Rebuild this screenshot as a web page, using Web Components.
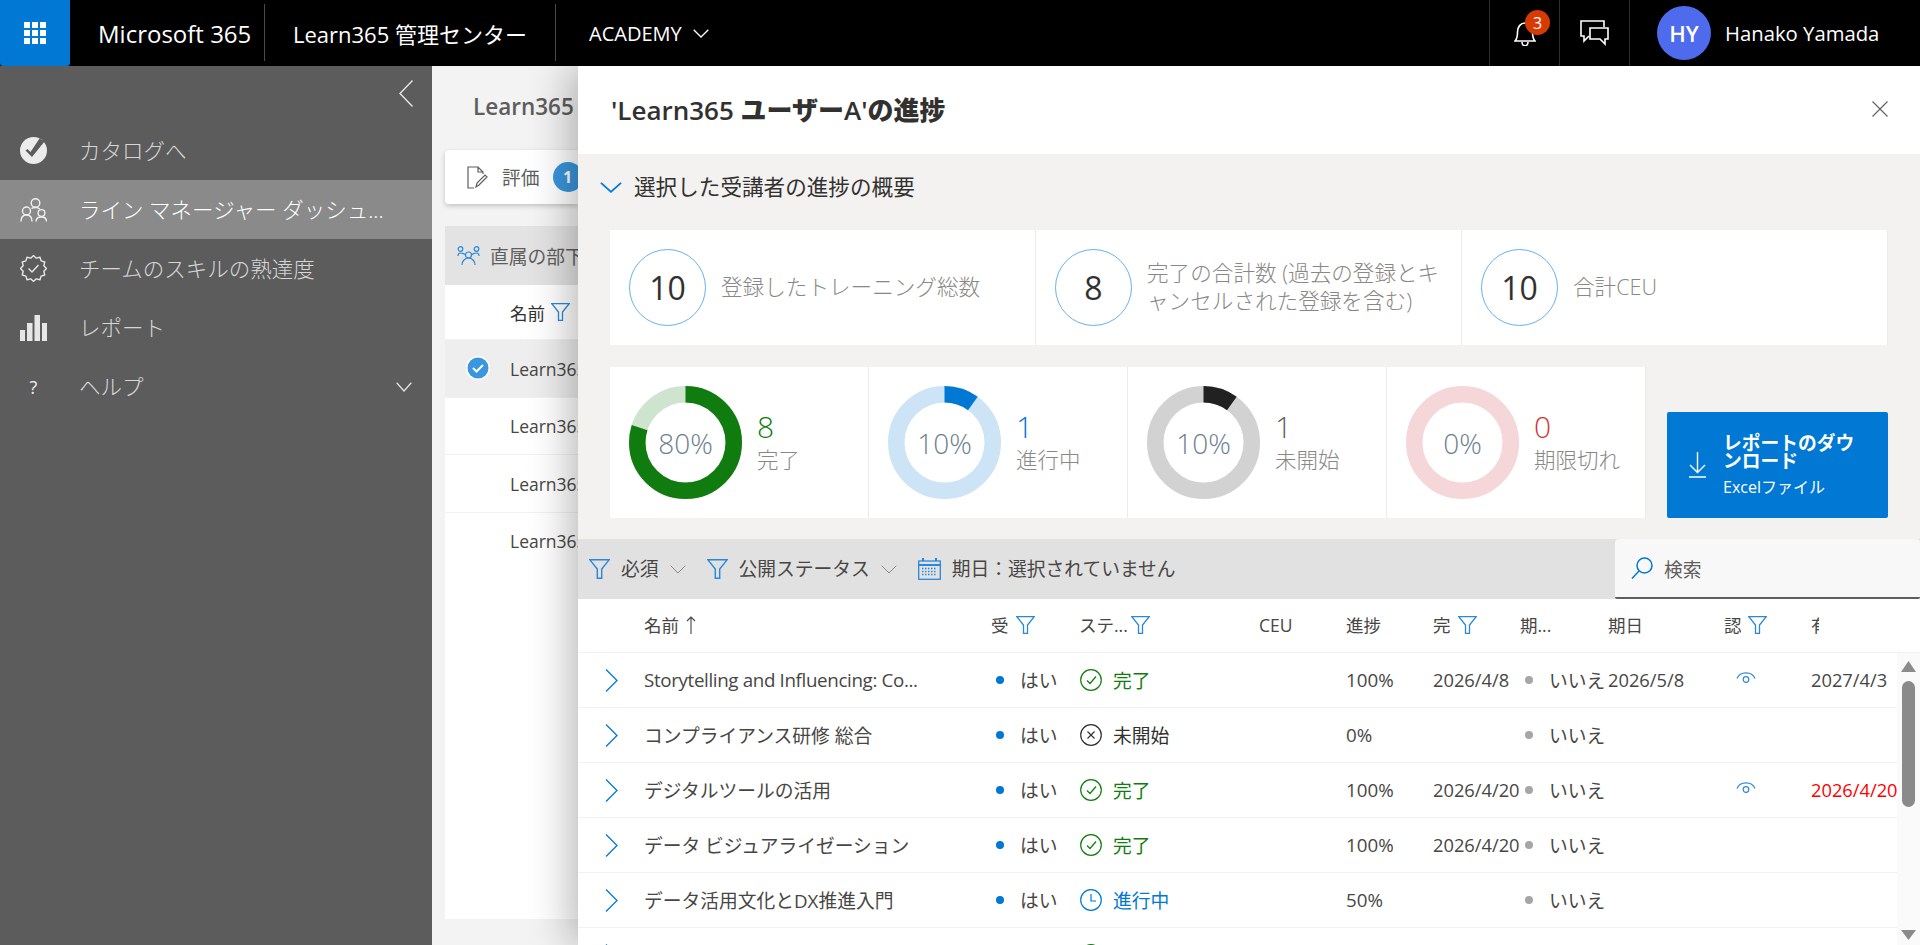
<!DOCTYPE html>
<html lang="ja">
<head>
<meta charset="utf-8">
<title>Learn365 管理センター</title>
<style>
  html, body { margin: 0; height: 945px; overflow: hidden; }
  body {
    font-family: "Open Sans", "Noto Sans CJK JP", sans-serif;
    color: #323130;
  }
</style>
</head>
<body>
<app-shell>
  <top-bar slot="top"></top-bar>
  <side-nav slot="nav">
    <nav-item>
      <svg slot="icon" width="27" height="27" viewBox="0 0 27 27"><circle cx="13.5" cy="13.5" r="13.5" fill="#ececec"/><path d="M5.500 13.500l2-1.500 3 3L19.500 1.500l5 3L12 20z" fill="#5c5c5c"/></svg>
      カタログへ
    </nav-item>
    <nav-item active>
      <svg slot="icon" width="27" height="24" viewBox="0 0 27 24" fill="none" stroke="#f0f0f0" stroke-width="1.4"><circle cx="15.500" cy="5" r="4.300"/><circle cx="6.500" cy="13" r="4"/><circle cx="21.500" cy="15" r="3.400"/><path d="M1 23.500c0-4.500 2-6.500 5.500-6.500s5.500 2 5.500 6.500M16 23.500c0-3 2-4.500 5.500-4.500s5 1.500 5 4.500M11.500 10.500c1.200-.7 2.600-1 4-1 1.800 0 3.200.5 4.500 1.500"/></svg>
      ライン マネージャー ダッシュ...
    </nav-item>
    <nav-item>
      <svg slot="icon" width="27" height="27" viewBox="0 0 27 27" fill="none" stroke="#e6e6e6" stroke-width="1.4" stroke-linejoin="round"><path d="M13.500.5 16.270 3.160 20 2.240 21.070 5.930 24.760 7 23.840 10.730 26.500 13.500 23.840 16.270 24.760 20 21.070 21.070 20 24.760 16.270 23.840 13.500 26.500 10.730 23.840 7 24.760 5.930 21.070 2.240 20 3.160 16.270.5 13.500 3.160 10.730 2.240 7 5.930 5.930 7 2.240 10.730 3.160z"/><path d="M8.500 13.500l3.500 3.500 6.500-7"/></svg>
      チームのスキルの熟達度
    </nav-item>
    <nav-item>
      <svg slot="icon" width="27" height="27" viewBox="0 0 27 27" fill="#e6e6e6"><rect y="16" width="5" height="11"/><rect x="7" y="9" width="5.500" height="18"/><rect x="14.500" y="1" width="5.500" height="26"/><rect x="22" y="9" width="5" height="18"/></svg>
      レポート
    </nav-item>
    <nav-item expandable>
      <span slot="icon" class="help">?</span>
      ヘルプ
    </nav-item>
  </side-nav>
  <learners-pane slot="main">
    <learner-row selected>Learn365 ユーザーA</learner-row>
    <learner-row>Learn365 ユーザーB</learner-row>
    <learner-row>Learn365 ユーザーC</learner-row>
    <learner-row>Learn365 ユーザーD</learner-row>
  </learners-pane>
  <progress-panel slot="panel">
    <span slot="title">'Learn365 <b>ユーザー</b>A'<b>の進捗</b></span>
    <stat-tile slot="stats" value="10">登録したトレーニング総数</stat-tile>
    <stat-tile slot="stats" value="8">完了の合計数 (過去の登録とキ<br>ャンセルされた登録を含む)</stat-tile>
    <stat-tile slot="stats" value="10">合計CEU</stat-tile>
    <donut-tile slot="donuts" percent="80" value="8" ring="#107c10" rest="#cfe4cf" tone="#107c10">完了</donut-tile>
    <donut-tile slot="donuts" percent="10" value="1" ring="#0078d4" rest="#cce4f6" tone="#0078d4">進行中</donut-tile>
    <donut-tile slot="donuts" percent="10" value="1" ring="#212121" rest="#d2d2d2" tone="#605e5c">未開始</donut-tile>
    <donut-tile slot="donuts" percent="0" value="0" ring="#d13438" rest="#f6d7d9" tone="#d13438">期限切れ</donut-tile>
    <filter-bar slot="filters"></filter-bar>
    <course-table slot="table">
      <course-row latin name="Storytelling and Influencing: Co..." status="done" progress="100%" finished="2026/4/8" due="2026/5/8" cert expiry="2027/4/3"></course-row>
      <course-row name="コンプライアンス研修 総合" status="todo" progress="0%"></course-row>
      <course-row name="デジタルツールの活用" status="done" progress="100%" finished="2026/4/20" cert expiry="2026/4/20" expired></course-row>
      <course-row name="データ ビジュアライゼーション" status="done" progress="100%" finished="2026/4/20"></course-row>
      <course-row name="データ活用文化とDX推進入門" status="doing" progress="50%"></course-row>
      <course-row status="done" partial></course-row>
    </course-table>
  </progress-panel>
</app-shell>

<script>
const FUNNEL = (w = 19, h = 18) => `<svg width="${w}" height="${h}" viewBox="0 0 19 18" fill="none" stroke="#2b88d8" stroke-width="1.3"><path d="M.8.7h17.400L11.500 9v8.300H7.500V9z"/></svg>`;
const CHEVRON_DOWN = (w, h, c, sw = 1.3) => `<svg width="${w}" height="${h}" viewBox="0 0 16 9" preserveAspectRatio="none" fill="none" stroke="${c}" stroke-width="${sw}" vector-effect="non-scaling-stroke"><path d="M.7.7 8 8l7.300-7.300"/></svg>`;

class AppShell extends HTMLElement {
  constructor() {
    super();
    this.attachShadow({ mode: "open" }).innerHTML = `
      <style>
        :host { display: grid; grid-template: 66px 879px / 432px 146px 1fr; position: relative; height: 945px; overflow: hidden; background: #f3f3f3; }
        .top { grid-column: 1 / 4; z-index: 2; }
        .panel { position: absolute; left: 578px; top: 66px; right: 0; bottom: 0; z-index: 1; }
        .main { min-width: 0; overflow: hidden; }
      </style>
      <div class="top"><slot name="top"></slot></div>
      <slot name="nav"></slot>
      <div class="main"><slot name="main"></slot></div>
      <div class="panel"><slot name="panel"></slot></div>`;
  }
}

class TopBar extends HTMLElement {
  constructor() {
    super();
    this.attachShadow({ mode: "open" }).innerHTML = `
      <style>
        :host { display: flex; height: 66px; background: #000; color: #fff; align-items: stretch; }
        .waffle { width: 70px; background: #0078d4; display: grid; place-items: center; border-radius: 0 0 3px 3px; }
        .grid { display: grid; grid-template-columns: repeat(3, 6px); grid-auto-rows: 6px; gap: 2px; }
        .grid i { background: #fff; }
        .title { display: flex; align-items: center; padding-left: 28px; box-sizing: border-box; position: relative; white-space: nowrap; }
        .title.brand { width: 195px; font-size: 24px; }
        .title.app { width: 291px; font-size: 22px; }
        .title::after { content: ""; position: absolute; right: 0; top: 4px; bottom: 5px; width: 1px; background: #4a4a4a; }
        .academy { display: flex; align-items: center; gap: 11px; padding-left: 33px; font-size: 20px; flex: 1; }
        .tool { width: 69px; border-left: 1px solid #2e2e2e; display: grid; place-items: center; position: relative; }
        .badge { position: absolute; left: 35px; top: 10px; width: 25px; height: 25px; border-radius: 50%; background: #d83b01; color: #fff; font-size: 16px; display: grid; place-items: center; line-height: 1; }
        .user { display: flex; align-items: center; gap: 14px; width: 291px; box-sizing: border-box; padding-left: 27px; border-left: 1px solid #2e2e2e; font-size: 20.300px; }
        .avatar { width: 54px; height: 54px; border-radius: 50%; background: #4f6bed; display: grid; place-items: center; font-weight: 600; font-size: 22px; }
      </style>
      <div class="waffle"><div class="grid">${"<i></i>".repeat(9)}</div></div>
      <div class="title brand">Microsoft 365</div>
      <div class="title app">Learn365 管理センター</div>
      <div class="academy">ACADEMY ${CHEVRON_DOWN(16, 9, "#fff")}</div>
      <div class="tool">
        <svg width="22" height="25" viewBox="0 0 22 25" fill="none" stroke="#fff" stroke-width="1.6"><path d="M1 20c2-2 2.500-4 2.500-9 0-5 3-9 7.500-9s7.500 4 7.500 9c0 5 .5 7 2.500 9z"/><path d="M8 21c0 5 6 5 6 0"/></svg>
        <span class="badge">3</span>
      </div>
      <div class="tool">
        <svg width="29" height="26" viewBox="0 0 29 26" fill="none" stroke="#fff" stroke-width="1.6"><path d="M24 7V1H1v15h3v5l5-5"/><path d="M10 8h18v11h-3v5l-5-5H10z"/></svg>
      </div>
      <div class="user"><span class="avatar">HY</span><span>Hanako Yamada</span></div>`;
  }
}

class SideNav extends HTMLElement {
  constructor() {
    super();
    this.attachShadow({ mode: "open" }).innerHTML = `
      <style>
        :host { display: block; background: #5c5c5c; height: 879px; }
        .collapse { height: 55px; display: flex; justify-content: flex-end; padding: 14px 19px 0 0; box-sizing: border-box; }
      </style>
      <div class="collapse"><svg width="14" height="27" viewBox="0 0 14 27" fill="none" stroke="#e6e6e6" stroke-width="1.4"><path d="M13.500.5 1 13.500l12.500 13"/></svg></div>
      <slot></slot>`;
  }
}

class NavItem extends HTMLElement {
  constructor() {
    super();
    const more = this.hasAttribute("expandable") ? CHEVRON_DOWN(16, 10, "#e6e6e6") : "";
    this.attachShadow({ mode: "open" }).innerHTML = `
      <style>
        :host { display: flex; align-items: center; height: 59px; padding: 0 20px; color: #d6d6d6; font-size: 21.500px; font-weight: 300; }
        :host([active]) { background: #8a8a8a; color: #fff; }
        .icon { width: 59px; flex: none; display: flex; align-items: center; }
        .text { flex: 1; white-space: nowrap; margin-top: -2px; }
        ::slotted(.help) { width: 27px; text-align: center; font-size: 18px; font-weight: 400; color: #efefef; }
      </style>
      <span class="icon"><slot name="icon"></slot></span>
      <span class="text"><slot></slot></span>
      ${more}`;
  }
}

class LearnersPane extends HTMLElement {
  constructor() {
    super();
    this.attachShadow({ mode: "open" }).innerHTML = `
      <style>
        :host { display: flex; flex-direction: column; height: 879px; background: #f3f3f3; padding: 0 0 0 13px; box-sizing: border-box; color: #605e5c; }
        h2 { margin: 0; height: 84px; line-height: 82px; padding-left: 28px; font-size: 22.500px; font-weight: 600; color: #5e5e5e; white-space: nowrap; }
        .tab { height: 54px; display: flex; align-items: center; background: #fff; border-radius: 4px 0 0 4px; box-shadow: 0 2px 5px rgba(0,0,0,.2); padding-left: 22px; font-size: 18.750px; box-sizing: border-box; white-space: nowrap; }
        .tab svg, .tab span, .head svg { flex: none; }
        .tab span { margin-left: 14px; margin-top: -2px; }
        .tab b { margin-left: 13px; width: 30px; height: 30px; flex: none; border-radius: 50%; background: #3a96dd; color: #fff; display: grid; place-items: center; font-size: 16px; }
        .head { margin-top: 22px; height: 59px; background: #e3e3e3; display: flex; align-items: center; gap: 10px; padding-left: 12px; font-size: 18.750px; white-space: nowrap; }
        .list { height: 634px; background: #fff; }
        .names { height: 54px; display: flex; align-items: center; gap: 6px; padding-left: 65px; font-size: 17.500px; color: #323130; }
      </style>
      <h2>Learn365</h2>
      <div class="tab">
        <svg width="21" height="23" viewBox="0 0 21 23" fill="none" stroke="#605e5c" stroke-width="1.2"><path d="M7 22H1V1h10l5 5v2M11 1v5h5M9 21l1-4L18 9l2 2-8 8z"/></svg>
        <span>評価</span><b>1</b>
      </div>
      <div class="head">
        <svg width="23" height="20" viewBox="0 0 23 20" fill="none" stroke="#2b88d8" stroke-width="1.2"><circle cx="11.500" cy="9" r="3"/><circle cx="3.500" cy="3" r="2.300"/><circle cx="19.500" cy="3" r="2.300"/><path d="M5 19c0-4 3-7 6.500-7s6.500 3 6.500 7M1 10c0-2 1-3 2.500-3S8 8 8.500 9M22 10c0-2-1-3-2.500-3s-4.500 1-5 2"/></svg>
        直属の部下
      </div>
      <div class="list">
        <div class="names">名前 ${FUNNEL()}</div>
        <slot></slot>
      </div>`;
  }
}

class LearnerRow extends HTMLElement {
  constructor() {
    super();
    this.attachShadow({ mode: "open" }).innerHTML = `
      <style>
        :host { display: flex; align-items: center; height: 57.500px; padding-left: 21px; box-sizing: border-box; border-top: 1px solid #f3f2f1; font-size: 17.500px; color: #484644; white-space: nowrap; }
        :host([selected]) { background: #eee; }
        .check { width: 24px; height: 24px; margin-right: 20px; flex: none; visibility: hidden; }
        :host([selected]) .check { visibility: visible; }
      </style>
      <svg class="check" viewBox="0 0 24 24"><circle cx="12" cy="12" r="12" fill="#fff"/><circle cx="12" cy="12" r="10.500" fill="#3a96dd"/><path d="M7 12l3.500 3.500L17 9" fill="none" stroke="#fff" stroke-width="2"/></svg>
      <slot></slot>`;
  }
}

class ProgressPanel extends HTMLElement {
  constructor() {
    super();
    this.attachShadow({ mode: "open" }).innerHTML = `
      <style>
        :host { display: flex; flex-direction: column; height: 879px; background: #fff; box-shadow: -6px 0 40px rgba(0,0,0,.3); overflow: hidden; }
        header { height: 88px; flex: none; display: flex; align-items: center; justify-content: space-between; padding: 0 32px 3px 33px; box-sizing: border-box; font-size: 26px; font-weight: 600; color: #323130; }
        ::slotted(span) { white-space: nowrap; }
        .overview { height: 385px; flex: none; box-sizing: border-box; background: #f3f2f1; padding: 0 32px; }
        .sum { height: 76px; margin-left: -10px; display: flex; align-items: center; gap: 12px; padding-bottom: 10px; box-sizing: border-box; font-size: 21.600px; color: #323130; }
        .sum span { margin-top: -3px; }
        .stats { display: grid; grid-template-columns: repeat(3, 1fr); height: 115px; background: #fff; }
        .row { display: flex; align-items: flex-end; margin-top: 22px; height: 151px; }
        .donuts { display: flex; background: #fff; height: 151px; }
        button { margin-left: 21px; width: 221px; height: 106px; background: #0078d4; color: #fff; border: 0; border-radius: 2px; display: flex; align-items: center; gap: 17px; padding: 0 0 0 22px; text-align: left; font: inherit; }
        button strong { display: block; font-size: 18.750px; line-height: 18px; font-weight: 700; margin-bottom: 8px; }
        button small { font-size: 16px; line-height: 18px; display: block; }
      </style>
      <header>
        <slot name="title"></slot>
        <svg width="16" height="16" viewBox="0 0 16 16" fill="none" stroke="#605e5c" stroke-width="1.100"><path d="M.5.5l15 15M15.500.5l-15 15"/></svg>
      </header>
      <section class="overview">
        <div class="sum">${CHEVRON_DOWN(22, 11, "#0078d4")}<span>選択した受講者の進捗の概要</span></div>
        <div class="stats"><slot name="stats"></slot></div>
        <div class="row">
          <div class="donuts"><slot name="donuts"></slot></div>
          <button>
            <svg width="17" height="26" viewBox="0 0 17 26" fill="none" stroke="#fff" stroke-width="1.400"><path d="M8.500 0v20M1 13l7.500 7.500L16 13M0 25h17"/></svg>
            <span><strong>レポートのダウ<br>ンロード</strong><small>Excelファイル</small></span>
          </button>
        </div>
      </section>
      <slot name="filters"></slot>
      <slot name="table"></slot>`;
  }
}

class StatTile extends HTMLElement {
  constructor() {
    super();
    this.attachShadow({ mode: "open" }).innerHTML = `
      <style>
        :host { display: flex; align-items: center; gap: 15px; padding-left: 19px; border-right: 1px solid #edebe9; font-size: 21.600px; line-height: 28px; color: #8a8886; white-space: nowrap; font-weight: 300; }
        :host(:last-child) { border-right: 0; }
        .num { width: 77px; height: 77px; flex: none; box-sizing: border-box; border: 1px solid #6cb0ea; border-radius: 50%; display: grid; place-items: center; font-size: 32px; font-weight: 400; color: #323130; }
        .label { margin-top: -2px; }
      </style>
      <span class="num">${this.getAttribute("value")}</span>
      <span class="label"><slot></slot></span>`;
  }
}

class DonutTile extends HTMLElement {
  constructor() {
    super();
    const pct = Number(this.getAttribute("percent"));
    const tone = this.getAttribute("tone");
    this.attachShadow({ mode: "open" }).innerHTML = `
      <style>
        :host { display: flex; align-items: center; gap: 15px; width: 259px; box-sizing: border-box; padding-left: 19px; border-right: 1px solid #edebe9; font-weight: 300; }
        :host(:last-child) { border-right: 0; }
        .ring { display: grid; place-items: center; width: 113px; height: 113px; flex: none; }
        .ring > * { grid-area: 1 / 1; }
        .pct { font-size: 28px; color: #6b7f90; }
        .num { font-size: 30px; line-height: 34px; color: ${tone}; }
        .label { font-size: 21.500px; line-height: 32px; color: #8a8886; white-space: nowrap; }
      </style>
      <div class="ring">
        <svg width="113" height="113" viewBox="0 0 113 113" fill="none" stroke-width="16.500">
          <circle cx="56.500" cy="56.500" r="48.250" stroke="${this.getAttribute("rest")}"/>
          ${pct ? `<circle cx="56.500" cy="56.500" r="48.250" stroke="${this.getAttribute("ring")}" pathLength="100" stroke-dasharray="${pct} 100" transform="rotate(-90 56.500 56.500)"/>` : ""}
        </svg>
        <span class="pct">${pct}%</span>
      </div>
      <div><div class="num">${this.getAttribute("value")}</div><div class="label"><slot></slot></div></div>`;
  }
}

class FilterBar extends HTMLElement {
  constructor() {
    super();
    this.attachShadow({ mode: "open" }).innerHTML = `
      <style>
        :host { display: flex; height: 60px; background: #e1e1e1; font-size: 18.750px; color: #484644; }
        .filters { flex: 1; display: flex; align-items: center; padding-left: 11px; }
        .f { display: flex; align-items: center; gap: 11px; margin-right: 21px; white-space: nowrap; }
        .f span { margin-top: -3px; }
        .f svg:first-child { flex: none; }
        .search { width: 305px; box-sizing: border-box; background: #f8f8f8; border-bottom: 2px solid #605e5c; border-radius: 4px 4px 2px 2px; display: flex; align-items: center; gap: 11px; padding-left: 16px; color: #605e5c; }
      </style>
      <div class="filters">
        <div class="f">${FUNNEL(21, 20)}<span>必須</span>${CHEVRON_DOWN(16, 9, "#8a8886", 1)}</div>
        <div class="f">${FUNNEL(21, 20)}<span>公開ステータス</span>${CHEVRON_DOWN(16, 9, "#8a8886", 1)}</div>
        <div class="f">
          <svg width="23" height="22" viewBox="0 0 23 22" fill="none" stroke="#2b88d8" stroke-width="1.300"><rect x=".7" y="3" width="21.600" height="18.300"/><path d="M.7 7h21.600M5 0v3M18 0v3" stroke-width="2"/><path d="M4 10.500h15M4 13.500h15M4 16.500h15" stroke-dasharray="1.500 1.500"/></svg>
          <span>期日：選択されていません</span>
        </div>
      </div>
      <div class="search">
        <svg width="22" height="22" viewBox="0 0 22 22" fill="none" stroke="#0078d4" stroke-width="1.500"><circle cx="13.500" cy="8.500" r="7.500"/><path d="M8 14 1 21.500"/></svg>
        検索
      </div>`;
  }
}

const COLS = "66px 347px 88px 180px 87px 87px 87px 88px 116px 87px 86px";

class CourseTable extends HTMLElement {
  constructor() {
    super();
    const th = (text, funnel, clip, gap = 7) => `<span class="th" style="gap:${gap}px">${clip ? `<span class="clip" style="width:${clip}px">${text}</span>` : text}${funnel ? FUNNEL() : ""}</span>`;
    this.attachShadow({ mode: "open" }).innerHTML = `
      <style>
        :host { display: flex; flex-direction: column; flex: 1; min-height: 0; font-size: 17.500px; color: #484644; }
        .head { display: grid; grid-template-columns: ${COLS} 23px; height: 54px; flex: none; box-sizing: border-box; border-bottom: 1px solid #f3f2f1; align-items: center; }
        .th { display: flex; align-items: center; gap: 7px; white-space: nowrap; overflow: hidden; margin-top: -2px; }
        .clip { overflow: hidden; display: block; flex: none; }
        .wrap { display: flex; flex: 1; min-height: 0; }
        .rows { flex: 1; overflow: hidden; }
        .scroll { width: 23px; background: #fafafa; display: flex; flex-direction: column; align-items: center; padding: 8px 0 5px; box-sizing: border-box; }
        .thumb { width: 13px; height: 126px; margin-top: 9px; border-radius: 7px; background: #8a8a8a; }
        .down { margin-top: auto; }
      </style>
      <div class="head">
        <span></span>
        <span class="th">名前 <svg width="10" height="18" viewBox="0 0 10 18" fill="none" stroke="#484644" stroke-width="1.100"><path d="M5 18V1M1 5l4-4 4 4"/></svg></span>
        ${th("受", true, 18)}${th("ステ...", true, 0, 3)}${th("CEU")}${th("進捗")}${th("完", true, 18)}${th("期...")}${th("期日")}${th("認.", true, 17)}${th("有効期限", false, 8)}
      </div>
      <div class="wrap">
        <div class="rows"><slot></slot></div>
        <div class="scroll">
          <svg width="15" height="11" viewBox="0 0 15 11"><path d="M7.500 0 15 11H0z" fill="#8a8a8a"/></svg>
          <div class="thumb"></div>
          <svg class="down" width="15" height="10" viewBox="0 0 15 10"><path d="M0 0h15L7.500 10z" fill="#8a8a8a"/></svg>
        </div>
      </div>`;
  }
}

const STATUS = {
  done: { c: "#107c10", t: "完了", g: '<path d="M7 11.500l3 3 6-7"/>' },
  todo: { c: "#323130", t: "未開始", g: '<path d="M7.500 7.500l7 7M14.500 7.500l-7 7"/>' },
  doing: { c: "#0078d4", t: "進行中", g: '<path d="M11 5v7h5"/>' }
};

class CourseRow extends HTMLElement {
  constructor() {
    super();
    const get = (n) => this.getAttribute(n) || "";
    const s = STATUS[get("status")];
    const partial = this.hasAttribute("partial");
    const eye = `<svg width="20" height="12" viewBox="0 0 20 12" fill="none" stroke="#2b88d8" stroke-width="1.200"><path d="M1 6.500C4-1 16-1 19 6.500"/><circle cx="10" cy="7.500" r="2.800"/></svg>`;
    this.attachShadow({ mode: "open" }).innerHTML = `
      <style>
        :host { display: grid; grid-template-columns: ${COLS}; height: 55px; box-sizing: border-box; border-bottom: 1px solid #f3f2f1; align-items: center; font-size: 18.750px; color: #484644; white-space: nowrap; }
        .chev { padding-left: 27px; display: flex; }
        .t { margin-top: -2px; }
        .date { font-size: 18.300px; }
        :host([latin]) .name { letter-spacing: -.35px; }
        .dot { display: flex; align-items: center; gap: 16px; padding-left: 5px; }
        .dot i { width: 8px; height: 8px; border-radius: 50%; background: #0078d4; }
        .dot.no i { background: #a6a6a6; }
        .dot span, .st span { margin-top: -2px; }
        .st { display: flex; align-items: center; gap: 11px; padding-left: 1px; color: ${s.c}; }
        .eye { padding-left: 12px; display: flex; margin-top: -5px; }
        .red { color: #f00; }
      </style>
      <span class="chev"><svg width="13" height="23" viewBox="0 0 13 23" fill="none" stroke="#0078d4" stroke-width="1.300"><path d="M1 .5 12 11.500 1 22.500"/></svg></span>
      <span class="t name">${get("name")}</span>
      <span class="dot">${partial ? "" : "<i></i><span>はい</span>"}</span>
      <span class="st"><svg width="22" height="22" viewBox="0 0 22 22" fill="none" stroke="${s.c}" stroke-width="1.200"><circle cx="11" cy="11" r="10.300"/>${s.g}</svg>${partial ? "" : `<span>${s.t}</span>`}</span>
      <span></span>
      <span class="t">${get("progress")}</span>
      <span class="t date">${get("finished")}</span>
      <span class="dot no">${partial ? "" : "<i></i><span>いいえ</span>"}</span>
      <span class="t date">${get("due")}</span>
      <span class="eye">${this.hasAttribute("cert") ? eye : ""}</span>
      <span class="t date ${this.hasAttribute("expired") ? "red" : ""}">${get("expiry")}</span>`;
  }
}

customElements.define("app-shell", AppShell);
customElements.define("top-bar", TopBar);
customElements.define("side-nav", SideNav);
customElements.define("nav-item", NavItem);
customElements.define("learners-pane", LearnersPane);
customElements.define("learner-row", LearnerRow);
customElements.define("progress-panel", ProgressPanel);
customElements.define("stat-tile", StatTile);
customElements.define("donut-tile", DonutTile);
customElements.define("filter-bar", FilterBar);
customElements.define("course-table", CourseTable);
customElements.define("course-row", CourseRow);
</script>
</body>
</html>
